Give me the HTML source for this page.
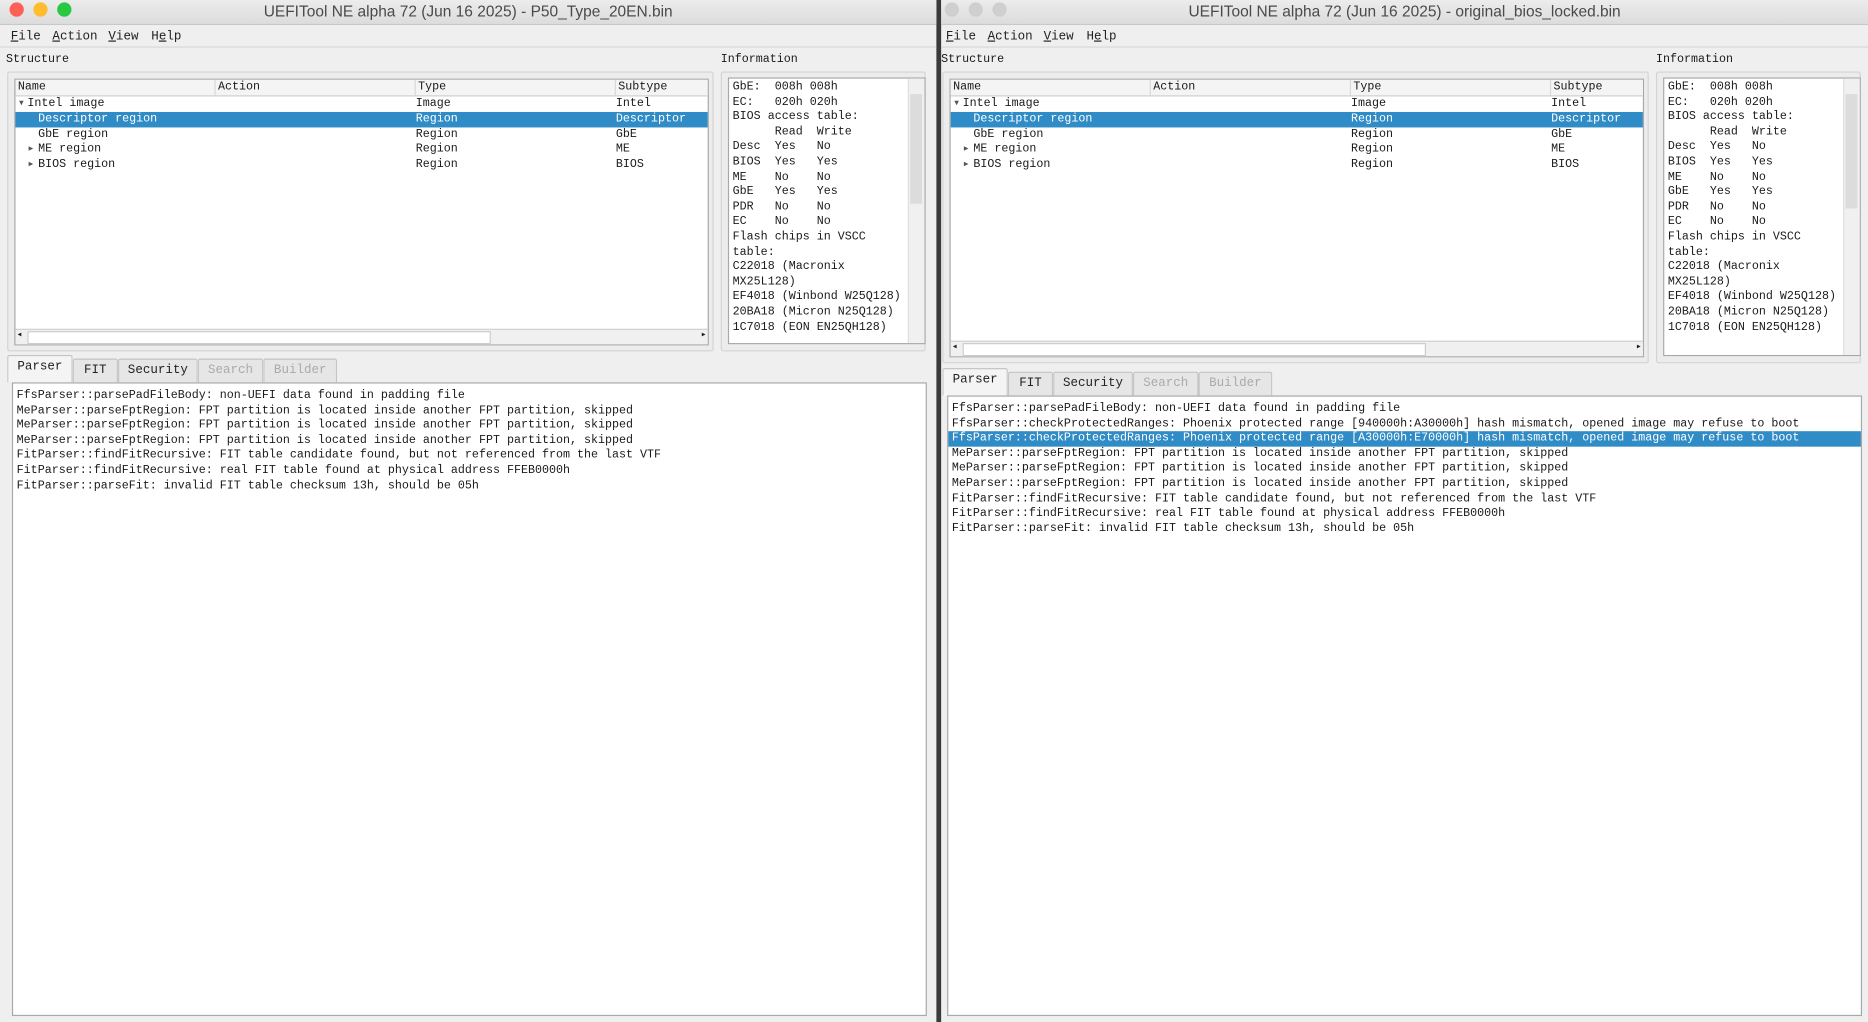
<!DOCTYPE html>
<html><head><meta charset="utf-8"><style>
html,body{margin:0;padding:0;width:1868px;height:1022px;overflow:hidden;background:#3a3a3a}
#s{position:absolute;left:0;top:0;width:1568px;height:858px;transform:scale(1.19133,1.19114);transform-origin:0 0}
.win{position:absolute;top:0;height:858px;background:#efefef;overflow:hidden}
.a{position:absolute}
.m{font-family:"Liberation Mono",monospace;font-size:9.8px;color:#1a1a1a;white-space:pre;line-height:12.6px}
.tb{position:absolute;left:0;right:0;top:0;height:20px;background:linear-gradient(#ececec,#dcdcdc);border-bottom:1px solid #c8c8c8}
.tt{position:absolute;left:0;right:0;top:1px;text-align:center;font-family:"Liberation Sans",sans-serif;font-size:13px;line-height:17px;color:#4a4a4a}
.dot{position:absolute;top:2px;width:12px;height:12px;border-radius:50%}
.menu{position:absolute;top:25px;font-family:"Liberation Mono",monospace;font-size:10.5px;color:#222}
.menu u{text-decoration:underline}
.gb{position:absolute;border:1px solid #d4d4d4;border-radius:2px;background:#ececec}
.box{position:absolute;background:#fff;border:1px solid #a8a8a8}
.hdr{position:absolute;left:0;right:0;top:0;height:13px;background:#f4f4f4;border-bottom:1px solid #d0d0d0}
.hdr span{position:absolute;top:0;height:13px;border-left:1px solid #d8d8d8;padding-left:2px}
.sel{position:absolute;left:0;right:0;height:12.6px;background:#308cc6}
.hs{position:absolute;background:#f0f0f0;border-top:1px solid #d0d0d0}
.tab{position:absolute;height:19px;border:1px solid #c4c4c4;border-bottom:none;background:#e6e6e6;text-align:center;font-family:"Liberation Mono",monospace;font-size:10.5px;line-height:19px;color:#222;border-radius:2px 2px 0 0}
.dis{color:#aaa}
</style></head><body><div id="s">

<!-- LEFT WINDOW -->
<div class="win" style="left:0;width:786px">
<div class="tb"></div>
<div class="dot" style="left:8px;background:#fe5f57"></div>
<div class="dot" style="left:28px;background:#febc2e"></div>
<div class="dot" style="left:48px;background:#28c840"></div>
<div class="tt">UEFITool NE alpha 72 (Jun 16 2025) - P50_Type_20EN.bin</div>
<div class="menu" style="left:9px"><u>F</u>ile</div>
<div class="menu" style="left:44px"><u>A</u>ction</div>
<div class="menu" style="left:91px"><u>V</u>iew</div>
<div class="menu" style="left:127px">H<u>e</u>lp</div>
<div class="a" style="left:0;right:0;top:39px;border-top:1px solid #d8d8d8"></div>
<div class="a m" style="left:5px;top:44px">Structure</div>
<div class="a m" style="left:605px;top:44px">Information</div>
<div class="gb" style="left:6px;top:60px;width:591px;height:233px"></div>
<div class="box" style="left:12px;top:66px;width:581px;height:222px">
 <div class="hdr m"><span style="left:0;border:none">Name</span><span style="left:167px">Action</span><span style="left:335px">Type</span><span style="left:503px">Subtype</span></div>
 <div class="sel" style="top:27px"></div>
 <div class="a m" style="left:2px;top:14px;color:#555">▾</div>
 <div class="a m" style="left:10px;top:14px">Intel image</div>
 <div class="a m" style="left:19px;top:27px;color:#fff">Descriptor region</div>
 <div class="a m" style="left:19px;top:40px">GbE region</div>
 <div class="a m" style="left:10px;top:52px;color:#555">▸</div>
 <div class="a m" style="left:19px;top:52px">ME region</div>
 <div class="a m" style="left:10px;top:65px;color:#555">▸</div>
 <div class="a m" style="left:19px;top:65px">BIOS region</div>
 <div class="a m" style="left:336px;top:14px">Image</div><div class="a m" style="left:504px;top:14px">Intel</div>
 <div class="a m" style="left:336px;top:27px;color:#fff">Region</div><div class="a m" style="left:504px;top:27px;color:#fff">Descriptor</div>
 <div class="a m" style="left:336px;top:40px">Region</div><div class="a m" style="left:504px;top:40px">GbE</div>
 <div class="a m" style="left:336px;top:52px">Region</div><div class="a m" style="left:504px;top:52px">ME</div>
 <div class="a m" style="left:336px;top:65px">Region</div><div class="a m" style="left:504px;top:65px">BIOS</div>
 <div class="hs" style="left:0;right:0;top:209px;height:12px"><div class="a" style="left:10px;top:1px;width:387px;height:9px;background:#fff;border:1px solid #ccc"></div><div class="a m" style="left:1px;top:-1px;font-size:8px">◂</div><div class="a m" style="right:1px;top:-1px;font-size:8px">▸</div></div>
</div>
<div class="gb" style="left:605px;top:60px;width:170px;height:233px"></div>
<div class="box" style="left:611px;top:65px;width:164px;height:222px">
 <div class="a m" style="left:3px;top:1px">GbE:  008h 008h
EC:   020h 020h
BIOS access table:
      Read  Write
Desc  Yes   No
BIOS  Yes   Yes
ME    No    No
GbE   Yes   Yes
PDR   No    No
EC    No    No
Flash chips in VSCC
table:
C22018 (Macronix
MX25L128)
EF4018 (Winbond W25Q128)
20BA18 (Micron N25Q128)
1C7018 (EON EN25QH128)</div>
 <div class="a" style="right:0;top:0;width:13px;height:222px;background:#f0f0f0;border-left:1px solid #e0e0e0"><div class="a" style="left:1px;top:13px;width:10px;height:92px;background:#dcdcdc"></div></div>
</div>
<div class="tab" style="left:6px;top:298px;width:53px;height:22px;background:#f4f4f4">Parser</div>
<div class="tab" style="left:61px;top:301px;width:36px">FIT</div>
<div class="tab" style="left:99px;top:301px;width:65px">Security</div>
<div class="tab dis" style="left:166px;top:301px;width:53px">Search</div>
<div class="tab dis" style="left:221px;top:301px;width:60px">Builder</div>
<div class="box" style="left:10px;top:321px;width:766px;height:530px">
<div class="a m" style="left:3px;top:4px">FfsParser::parsePadFileBody: non-UEFI data found in padding file
MeParser::parseFptRegion: FPT partition is located inside another FPT partition, skipped
MeParser::parseFptRegion: FPT partition is located inside another FPT partition, skipped
MeParser::parseFptRegion: FPT partition is located inside another FPT partition, skipped
FitParser::findFitRecursive: FIT table candidate found, but not referenced from the last VTF
FitParser::findFitRecursive: real FIT table found at physical address FFEB0000h
FitParser::parseFit: invalid FIT table checksum 13h, should be 05h</div>
</div>
</div>

<!-- RIGHT WINDOW -->
<div class="win" style="left:790px;width:778px">
<div class="tb"></div>
<div class="dot" style="left:3px;background:#cfcfcf"></div>
<div class="dot" style="left:23px;background:#cfcfcf"></div>
<div class="dot" style="left:43px;background:#cfcfcf"></div>
<div class="tt">UEFITool NE alpha 72 (Jun 16 2025) - original_bios_locked.bin</div>
<div class="menu" style="left:4px"><u>F</u>ile</div>
<div class="menu" style="left:39px"><u>A</u>ction</div>
<div class="menu" style="left:86px"><u>V</u>iew</div>
<div class="menu" style="left:122px">H<u>e</u>lp</div>
<div class="a" style="left:0;right:0;top:39px;border-top:1px solid #d8d8d8"></div>
<div class="a m" style="left:0px;top:44px">Structure</div>
<div class="a m" style="left:600px;top:44px">Information</div>
<div class="gb" style="left:1px;top:60px;width:591px;height:243px"></div>
<div class="box" style="left:7px;top:66px;width:581px;height:232px">
 <div class="hdr m"><span style="left:0;border:none">Name</span><span style="left:167px">Action</span><span style="left:335px">Type</span><span style="left:503px">Subtype</span></div>
 <div class="sel" style="top:27px"></div>
 <div class="a m" style="left:2px;top:14px;color:#555">▾</div>
 <div class="a m" style="left:10px;top:14px">Intel image</div>
 <div class="a m" style="left:19px;top:27px;color:#fff">Descriptor region</div>
 <div class="a m" style="left:19px;top:40px">GbE region</div>
 <div class="a m" style="left:10px;top:52px;color:#555">▸</div>
 <div class="a m" style="left:19px;top:52px">ME region</div>
 <div class="a m" style="left:10px;top:65px;color:#555">▸</div>
 <div class="a m" style="left:19px;top:65px">BIOS region</div>
 <div class="a m" style="left:336px;top:14px">Image</div><div class="a m" style="left:504px;top:14px">Intel</div>
 <div class="a m" style="left:336px;top:27px;color:#fff">Region</div><div class="a m" style="left:504px;top:27px;color:#fff">Descriptor</div>
 <div class="a m" style="left:336px;top:40px">Region</div><div class="a m" style="left:504px;top:40px">GbE</div>
 <div class="a m" style="left:336px;top:52px">Region</div><div class="a m" style="left:504px;top:52px">ME</div>
 <div class="a m" style="left:336px;top:65px">Region</div><div class="a m" style="left:504px;top:65px">BIOS</div>
 <div class="hs" style="left:0;right:0;top:219px;height:12px"><div class="a" style="left:10px;top:1px;width:387px;height:9px;background:#fff;border:1px solid #ccc"></div><div class="a m" style="left:1px;top:-1px;font-size:8px">◂</div><div class="a m" style="right:1px;top:-1px;font-size:8px">▸</div></div>
</div>
<div class="gb" style="left:600px;top:60px;width:170px;height:243px"></div>
<div class="box" style="left:606px;top:65px;width:164px;height:232px">
 <div class="a m" style="left:3px;top:1px">GbE:  008h 008h
EC:   020h 020h
BIOS access table:
      Read  Write
Desc  Yes   No
BIOS  Yes   Yes
ME    No    No
GbE   Yes   Yes
PDR   No    No
EC    No    No
Flash chips in VSCC
table:
C22018 (Macronix
MX25L128)
EF4018 (Winbond W25Q128)
20BA18 (Micron N25Q128)
1C7018 (EON EN25QH128)</div>
 <div class="a" style="right:0;top:0;width:13px;height:232px;background:#f0f0f0;border-left:1px solid #e0e0e0"><div class="a" style="left:1px;top:13px;width:10px;height:96px;background:#dcdcdc"></div></div>
</div>
<div class="tab" style="left:1px;top:309px;width:53px;height:22px;background:#f4f4f4">Parser</div>
<div class="tab" style="left:56px;top:312px;width:36px">FIT</div>
<div class="tab" style="left:94px;top:312px;width:65px">Security</div>
<div class="tab dis" style="left:161px;top:312px;width:53px">Search</div>
<div class="tab dis" style="left:216px;top:312px;width:60px">Builder</div>
<div class="box" style="left:5px;top:332px;width:766px;height:519px">
<div class="sel" style="top:29.2px"></div>
<div class="a m" style="left:3px;top:4px">FfsParser::parsePadFileBody: non-UEFI data found in padding file
FfsParser::checkProtectedRanges: Phoenix protected range [940000h:A30000h] hash mismatch, opened image may refuse to boot
<span style="color:#fff">FfsParser::checkProtectedRanges: Phoenix protected range [A30000h:E70000h] hash mismatch, opened image may refuse to boot</span>
MeParser::parseFptRegion: FPT partition is located inside another FPT partition, skipped
MeParser::parseFptRegion: FPT partition is located inside another FPT partition, skipped
MeParser::parseFptRegion: FPT partition is located inside another FPT partition, skipped
FitParser::findFitRecursive: FIT table candidate found, but not referenced from the last VTF
FitParser::findFitRecursive: real FIT table found at physical address FFEB0000h
FitParser::parseFit: invalid FIT table checksum 13h, should be 05h</div>
</div>
</div>

</div></body></html>
